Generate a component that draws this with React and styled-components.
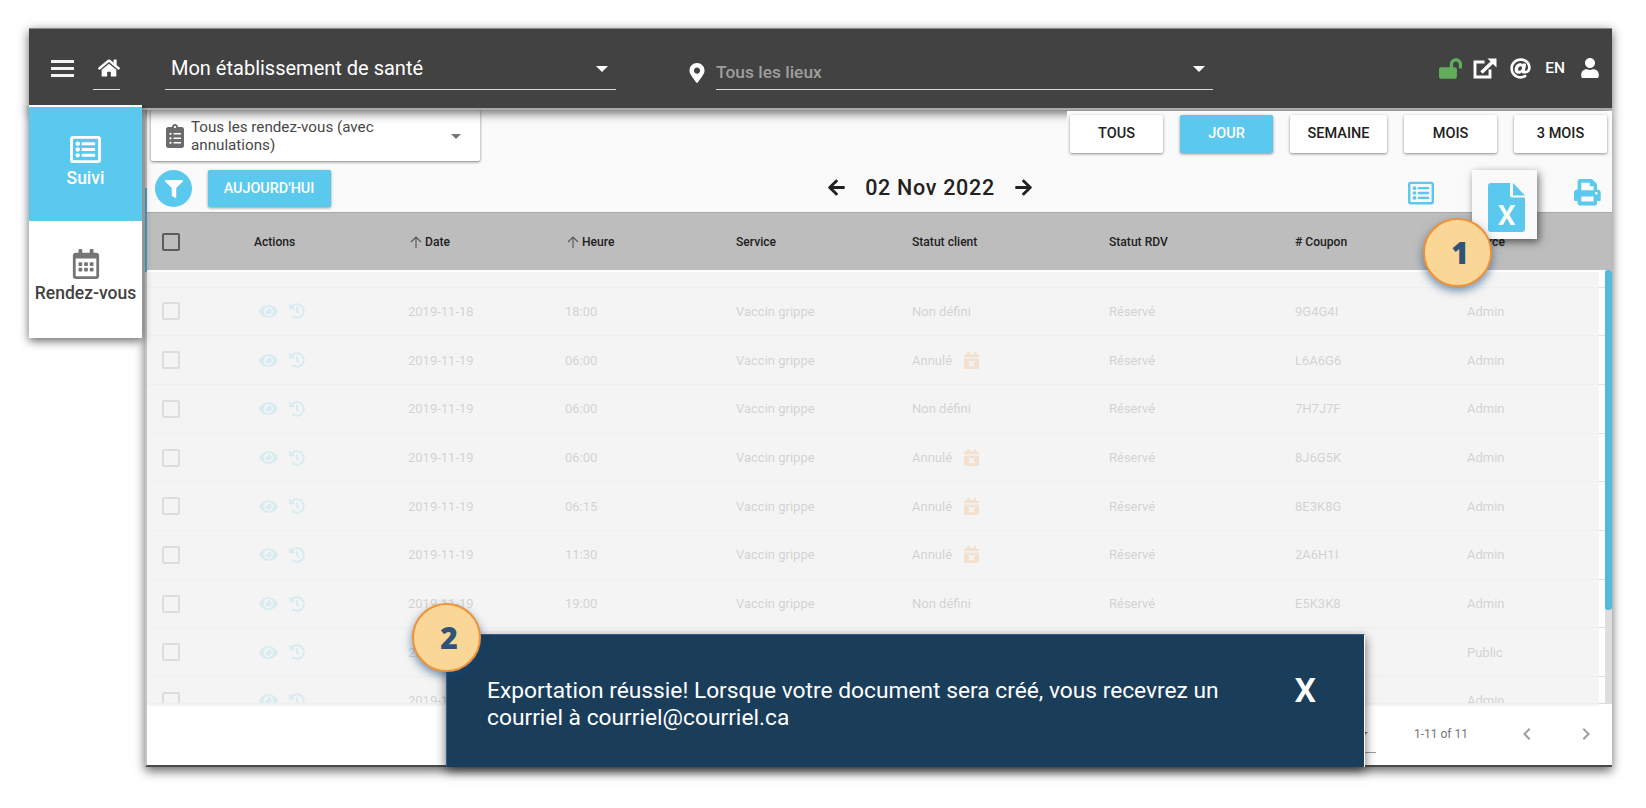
import React, { useState } from "react"
import styled, { createGlobalStyle } from "styled-components"
import {
    FaArrowLeft,
    FaArrowRight,
    FaAt,
    FaCalendarTimes,
    FaClipboardList,
    FaEye,
    FaFilter,
    FaHistory,
    FaHome,
    FaLockOpen,
    FaMapMarkerAlt,
    FaRegCalendarAlt,
    FaRegListAlt,
    FaUser,
} from "react-icons/fa"
import { MdChevronLeft, MdChevronRight } from "react-icons/md"

const blue = "#5bc8ee"

const GlobalStyle = createGlobalStyle`
    * {
        box-sizing: border-box;
    }
    body {
        margin: 0;
        background: #fff;
        font-family: Roboto, "Liberation Sans", sans-serif;
        color: #212121;
    }
    button {
        font-family: inherit;
        border: none;
        padding: 0;
        background: none;
        color: inherit;
    }
    svg {
        display: block;
        flex-shrink: 0;
    }
`

const Page = styled.div`
    position: relative;
    width: 1646px;
    height: 808px;
    padding: 28px 34px 0 29px;
    overflow: hidden;
`

const Header = styled.header`
    position: relative;
    z-index: 2;
    display: flex;
    height: 82px;
    padding-left: 22px;
    background: #424242;
    border-top: 1px solid #8a8a8a;
    border-bottom: 2px solid #a9a9a9;
    box-shadow: 0 3px 10px rgba(0, 0, 0, 0.6);
    color: #fff;
`

const MenuButton = styled.button`
    display: flex;
    flex-direction: column;
    justify-content: space-between;
    width: 23px;
    height: 17px;
    margin-top: 31px;
`

const MenuLine = styled.span`
    width: 23px;
    height: 3px;
    background: #f2f2f2;
`

const HomeLink = styled.a`
    display: flex;
    justify-content: center;
    width: 27px;
    height: 61px;
    margin-left: 19px;
    padding: 28px 0 0 4px;
    border-bottom: 1px solid #e0e0e0;
`

const Field = styled.div`
    display: flex;
    justify-content: space-between;
    width: ${(p) => p.$width}px;
    height: 61px;
    margin-left: ${(p) => p.$gap}px;
    padding: ${(p) => p.$pad};
    border-bottom: 1px solid #d8d8d8;
    font-size: ${(p) => p.$size}px;
    font-weight: ${(p) => p.$weight || 400};
    line-height: 24px;
    color: ${(p) => p.$color || "#fff"};
`

const Caret = styled.span`
    width: 0;
    height: 0;
    margin-top: ${(p) => p.$top || 0}px;
    border: ${(p) => p.$size || 6.5}px solid transparent;
    border-top-color: ${(p) => p.$color || "#fff"};
    border-bottom: none;
`

const PinIcon = styled(FaMapMarkerAlt)`
    margin: 34px 0 0 71px;
`

const HeaderTools = styled.div`
    display: flex;
    align-items: center;
    height: 20px;
    margin: 29px 12px 0 auto;
`

const Lang = styled.button`
    margin: 0 15px 0 14px;
    font-size: 15.5px;
    font-weight: 500;
`

const Body = styled.div`
    display: flex;
    align-items: flex-start;
`

const Sidebar = styled.nav`
    position: relative;
    z-index: 3;
    width: 113px;
    margin: -5px 3px 0 0;
    border-top: 2px solid #fff;
    background: #fff;
    box-shadow: 0 3px 9px rgba(0, 0, 0, 0.6);
    clip-path: inset(0 -20px -20px -20px);
`

const SideItem = styled.a`
    display: flex;
    flex-direction: column;
    align-items: center;
    height: ${(p) => (p.$active ? 114 : 117)}px;
    padding-top: ${(p) => (p.$active ? 27 : 28)}px;
    background: ${(p) => (p.$active ? blue : "#fff")};
    color: ${(p) => (p.$active ? "#fff" : "#757575")};
`

const SideLabel = styled.span`
    margin-top: ${(p) => (p.$active ? 1 : 2)}px;
    font-size: 17.5px;
    font-weight: 500;
    line-height: 24px;
    color: ${(p) => (p.$active ? "#fff" : "#424242")};
`

const Main = styled.main`
    position: relative;
    display: flex;
    flex-direction: column;
    width: 1467px;
    height: 657px;
    border-left: 2px solid #c4c4c4;
    border-bottom: 2px solid #4a4a4a;
    background: #fafafa;
    box-shadow: 0 4px 10px rgba(0, 0, 0, 0.6);
`

const EdgeMark = styled.span`
    position: absolute;
    top: 78px;
    left: -2px;
    width: 2px;
    height: 84px;
    background: #45a5c8;
`

const FilterRow = styled.div`
    display: flex;
    align-items: flex-start;
    justify-content: space-between;
    height: 51px;
    padding-left: 4px;
`

const ListSelect = styled.div`
    display: flex;
    width: 329px;
    height: 51px;
    padding: 14px 19px 0 12px;
    border-radius: 2px;
    background: #fff;
    box-shadow: 0 1px 3px rgba(0, 0, 0, 0.5);
    color: #6b6b6b;
`

const SelectText = styled.span`
    width: 200px;
    margin: -6px auto 0 4px;
    font-size: 15.2px;
    line-height: 18px;
    color: #484848;
`

const Periods = styled.div`
    position: relative;
    z-index: 3;
    display: flex;
    gap: 17px;
    margin-top: 1px;
    padding: 4px 5px 4px 3px;
    background: #fafafa;
`

const PeriodButton = styled.button`
    width: ${(p) => p.$width || 93}px;
    height: 38px;
    border-radius: 2px;
    background: ${(p) => (p.$active ? blue : "#fff")};
    color: ${(p) => (p.$active ? "#fff" : "#212121")};
    box-shadow: 0 1px 3px rgba(0, 0, 0, 0.45);
    font-size: 14.5px;
    font-weight: 500;
    line-height: 30px;
    padding-bottom: 1px;
`

const Toolbar = styled.div`
    display: flex;
    align-items: center;
    height: 51px;
    padding: 4px 11px 0 8px;
    color: ${blue};
`

const FilterButton = styled.button`
    display: flex;
    align-items: center;
    justify-content: center;
    width: 37px;
    height: 37px;
    border-radius: 50%;
    background: ${blue};
    color: #fff;
`

const TodayButton = styled.button`
    width: 123px;
    height: 37px;
    margin-left: 16px;
    padding-right: 1px;
    border-radius: 2px;
    background: ${blue};
    box-shadow: 0 1px 3px rgba(0, 0, 0, 0.4);
    color: #fff;
    font-size: 14.4px;
    font-weight: 500;
    line-height: 35px;
`

const DateNav = styled.div`
    display: flex;
    align-items: center;
    width: 206px;
    margin: -2px 0 0 496px;
    justify-content: space-between;
    color: #212121;
    font-size: 21.5px;
    font-weight: 500;
    letter-spacing: 0.7px;
`

const ListTool = styled(FaRegListAlt)`
    margin: 8px 140px 0 auto;
`

const gridColumns = "92px 154px 157px 171px 176px 197px 186px 172px 1fr"

const TableHead = styled.div`
    display: grid;
    grid-template-columns: ${gridColumns};
    align-items: center;
    height: 58px;
    padding-left: 15px;
    border-top: 1px solid #a9a9a9;
    background: #bdbdbd;
    font-size: 12.1px;
    font-weight: 500;
`

const SortHead = styled.span`
    display: flex;
    align-items: center;
    gap: 3px;
    padding: 1px 0 0 2px;
`

const Checkbox = styled.span`
    display: block;
    width: 18px;
    height: 18px;
    border: 2px solid ${(p) => (p.$dark ? "#5c5c5c" : "#757575")};
    border-radius: 2px;
`

const TableArea = styled.div`
    position: relative;
    display: flex;
    height: 434px;
    padding-top: 2px;
    background: #fff;
`

const Rows = styled.div`
    flex: 1;
    height: 432px;
    overflow: hidden;
    border-bottom: 1px solid #dcdcdc;
    padding-top: 14.6px;
`

const Row = styled.div`
    display: grid;
    grid-template-columns: ${gridColumns};
    align-items: center;
    height: 48.7px;
    padding-left: 15px;
    border-top: 1px solid #e0e0e0;
    font-size: 13px;
    color: #333;
`

const Actions = styled.span`
    display: flex;
    align-items: center;
    gap: 11px;
    padding-left: 5px;
    color: ${blue};
`

const Status = styled.span`
    display: flex;
    align-items: center;
    gap: 11px;

    svg {
        color: #f18a32;
    }
`

const Veil = styled.div`
    position: absolute;
    top: 2px;
    left: 0;
    width: 1452px;
    bottom: -2px;
    background: rgba(242, 242, 242, 0.83);
`

const Scrollbar = styled.div`
    width: 7px;
    height: 434px;
    margin-top: -2px;
    background: #dedede;
`

const Thumb = styled.div`
    height: 340px;
    border-radius: 3px;
    background: #53b9de;
`

const Footer = styled.footer`
    display: flex;
    flex: 1;
    align-items: center;
    justify-content: flex-end;
    background: #fff;
    padding: 0 14px 2px 0;
    font-size: 12px;
    color: #757575;
`

const PageSize = styled.span`
    display: flex;
    justify-content: flex-end;
    width: 50px;
    height: 35px;
    margin: 3px 38px 0 0;
    padding: 14px 8px 0 0;
    border-bottom: 1px solid #9a9a9a;
`

const PageButton = styled.button`
    margin-left: ${(p) => p.$gap}px;
    color: #9e9e9e;
`

const ExportTile = styled.button`
    position: absolute;
    z-index: 4;
    left: 1472px;
    top: 170px;
    display: flex;
    align-items: flex-start;
    width: 65px;
    height: 69px;
    padding: 13px 0 0 16px;
    background: #fafafa;
    box-shadow: 2px 3px 8px rgba(0, 0, 0, 0.55);
`

const Toast = styled.div`
    position: absolute;
    z-index: 5;
    left: 446px;
    top: 634px;
    display: flex;
    justify-content: space-between;
    width: 919px;
    height: 133px;
    padding: 42px 48px 0 40px;
    background: #1a3d5a;
    border: 1px solid #3a5c94;
    border-right: 1px solid #fff;
    border-bottom: none;
    box-shadow: 0 4px 10px rgba(0, 0, 0, 0.6);
    color: #fff;
`

const ToastText = styled.p`
    width: 760px;
    margin: 0;
    font-size: 22.75px;
    line-height: 27px;
`

const CloseButton = styled.button`
    height: 27px;
    font-size: 34px;
    font-weight: 600;
    line-height: 27px;
`

const Badge = styled.div`
    position: absolute;
    z-index: 6;
    left: ${(p) => p.$left}px;
    top: ${(p) => p.$top}px;
    width: 69px;
    height: 69px;
    padding-left: 5px;
    border: 2.5px solid #f09237;
    border-radius: 50%;
    background: #fad796;
    box-shadow: 0 4px 10px rgba(20, 70, 120, 0.6);
    color: #2f5478;
    font-family: "Open Sans", sans-serif;
    font-size: 30px;
    font-weight: 800;
    line-height: 65px;
    text-align: center;
`

const periods = [
    { label: "TOUS" },
    { label: "JOUR" },
    { label: "SEMAINE", width: 97 },
    { label: "MOIS" },
    { label: "3 MOIS" },
]

const rows = [
    ["2019-11-18", "18:00", "Non défini", "9G4G4I", "Admin"],
    ["2019-11-19", "06:00", "Annulé", "L6A6G6", "Admin"],
    ["2019-11-19", "06:00", "Non défini", "7H7J7F", "Admin"],
    ["2019-11-19", "06:00", "Annulé", "8J6G5K", "Admin"],
    ["2019-11-19", "06:15", "Annulé", "8E3K8G", "Admin"],
    ["2019-11-19", "11:30", "Annulé", "2A6H1I", "Admin"],
    ["2019-11-19", "19:00", "Non défini", "E5K3K8", "Admin"],
    ["2019-11-19", "", "", "", "Public"],
    ["2019-11-19", "", "", "", "Admin"],
]

const SortArrow = () => (
    <svg width="12" height="12" viewBox="0 0 12 12" fill="none" stroke="#555" strokeWidth="1.1">
        <path d="M6 12V1M1 6l5-5 5 5" />
    </svg>
)

const OpenIcon = () => (
    <svg width="24" height="21" viewBox="0 0 24 21" fill="none" stroke="#fff">
        <path d="M11.500 4H2v15h15v-7.500" strokeWidth="2.900" />
        <path d="M8.500 14.500L19.500 4" strokeWidth="3.400" />
        <path d="M14.500 .5h9v9z" fill="#fff" stroke="none" />
    </svg>
)

const PrintIcon = () => (
    <svg width="27" height="27" viewBox="0 0 27 27" style={{ marginTop: 7 }}>
        <path
            d="M6.500 0H18l5 5v5.500a3.700 3.700 0 0 1 3.700 3.700V21a1 1 0 0 1-1 1H23v2.500a2 2 0 0 1-2 2H5.700a2 2 0 0 1-2-2V22H1a1 1 0 0 1-1-1v-6.800a3.700 3.700 0 0 1 3.700-3.700V2.500A2.500 2.500 0 0 1 6.500 0z"
            fill={blue}
        />
        <path d="M7.300 3.700h8.500v3.500h3.800v4H7.300zM7.300 17.500h12.300v5H7.300z" fill="#fafafa" />
        <circle cx="22.300" cy="14.300" r="1.300" fill="#fafafa" />
    </svg>
)

const ExcelIcon = () => (
    <svg width="37" height="49" viewBox="0 0 37 49">
        <path
            d="M3 0h19v12.500a2 2 0 0 0 2 2h13V46a3 3 0 0 1-3 3H3a3 3 0 0 1-3-3V3a3 3 0 0 1 3-3z"
            fill={blue}
        />
        <path d="M25 0l12 12.500H25z" fill={blue} />
        <text x="18.500" y="42" fontSize="28" fontWeight="600" textAnchor="middle" fill="#fff">
            X
        </text>
    </svg>
)

const AppointmentRow = ({ row }) => {
    const [date, time, status, coupon, source] = row
    return (
        <Row>
            <Checkbox />
            <Actions>
                <FaEye size={19} />
                <FaHistory size={16} />
            </Actions>
            <span>{date}</span>
            <span>{time}</span>
            <span>{time && "Vaccin grippe"}</span>
            <Status>
                {status}
                {status === "Annulé" && <FaCalendarTimes size={17} />}
            </Status>
            <span>{status && "Réservé"}</span>
            <span>{coupon}</span>
            <span>{source}</span>
        </Row>
    )
}

const App = () => {
    const [period, setPeriod] = useState("JOUR")
    const [toast, setToast] = useState(true)

    return (
        <Page>
            <GlobalStyle />
            <Header>
                <MenuButton>
                    <MenuLine />
                    <MenuLine />
                    <MenuLine />
                </MenuButton>
                <HomeLink>
                    <FaHome size={22} />
                </HomeLink>
                <Field $width={451} $gap={45} $pad="27px 8px 0 6px" $size={20}>
                    Mon établissement de santé
                    <Caret $top={10} />
                </Field>
                <PinIcon size={20} />
                <Field
                    $width={497}
                    $gap={9}
                    $pad="31px 8px 0 0"
                    $size={17.4}
                    $weight={500}
                    $color="#9e9e9e">
                    Tous les lieux
                    <Caret $top={6} />
                </Field>
                <HeaderTools>
                    <FaLockOpen size={23} color="#62ad5a" style={{ marginRight: 11 }} />
                    <OpenIcon />
                    <FaAt size={21} style={{ marginLeft: 13 }} />
                    <Lang>EN</Lang>
                    <FaUser size={20} />
                </HeaderTools>
            </Header>
            <Body>
                <Sidebar>
                    <SideItem $active>
                        <FaRegListAlt size={31} />
                        <SideLabel $active>Suivi</SideLabel>
                    </SideItem>
                    <SideItem>
                        <FaRegCalendarAlt size={30} />
                        <SideLabel>Rendez-vous</SideLabel>
                    </SideItem>
                </Sidebar>
                <Main>
                    <EdgeMark />
                    <FilterRow>
                        <ListSelect>
                            <FaClipboardList size={24} />
                            <SelectText>Tous les rendez-vous (avec annulations)</SelectText>
                            <Caret $top={10} $size={5} $color="#757575" />
                        </ListSelect>
                        <Periods>
                            {periods.map((p) => (
                                <PeriodButton
                                    key={p.label}
                                    $width={p.width}
                                    $active={p.label === period}
                                    onClick={() => setPeriod(p.label)}>
                                    {p.label}
                                </PeriodButton>
                            ))}
                        </Periods>
                    </FilterRow>
                    <Toolbar>
                        <FilterButton>
                            <FaFilter size={18} />
                        </FilterButton>
                        <TodayButton>AUJOURD'HUI</TodayButton>
                        <DateNav>
                            <FaArrowLeft size={19} />
                            02 Nov 2022
                            <FaArrowRight size={19} />
                        </DateNav>
                        <ListTool size={26} />
                        <PrintIcon />
                    </Toolbar>
                    <TableHead>
                        <Checkbox $dark />
                        <span>Actions</span>
                        <SortHead>
                            <SortArrow />
                            Date
                        </SortHead>
                        <SortHead>
                            <SortArrow />
                            Heure
                        </SortHead>
                        <span>Service</span>
                        <span>Statut client</span>
                        <span>Statut RDV</span>
                        <span># Coupon</span>
                        <span>Source</span>
                    </TableHead>
                    <TableArea>
                        <Rows>
                            {rows.map((row, i) => (
                                <AppointmentRow key={i} row={row} />
                            ))}
                        </Rows>
                        <Veil />
                        <Scrollbar>
                            <Thumb />
                        </Scrollbar>
                    </TableArea>
                    <Footer>
                        <PageSize>
                            <Caret $size={5} $color="#757575" />
                        </PageSize>
                        1-11 of 11
                        <PageButton $gap={47}>
                            <MdChevronLeft size={24} />
                        </PageButton>
                        <PageButton $gap={35}>
                            <MdChevronRight size={24} />
                        </PageButton>
                    </Footer>
                </Main>
            </Body>
            <ExportTile>
                <ExcelIcon />
            </ExportTile>
            {toast && (
                <Toast>
                    <ToastText>
                        Exportation réussie! Lorsque votre document sera créé, vous recevrez un
                        courriel à courriel@courriel.ca
                    </ToastText>
                    <CloseButton onClick={() => setToast(false)}>X</CloseButton>
                </Toast>
            )}
            <Badge $left={1423} $top={218}>
                1
            </Badge>
            <Badge $left={412} $top={603}>
                2
            </Badge>
        </Page>
    )
}

export default App
